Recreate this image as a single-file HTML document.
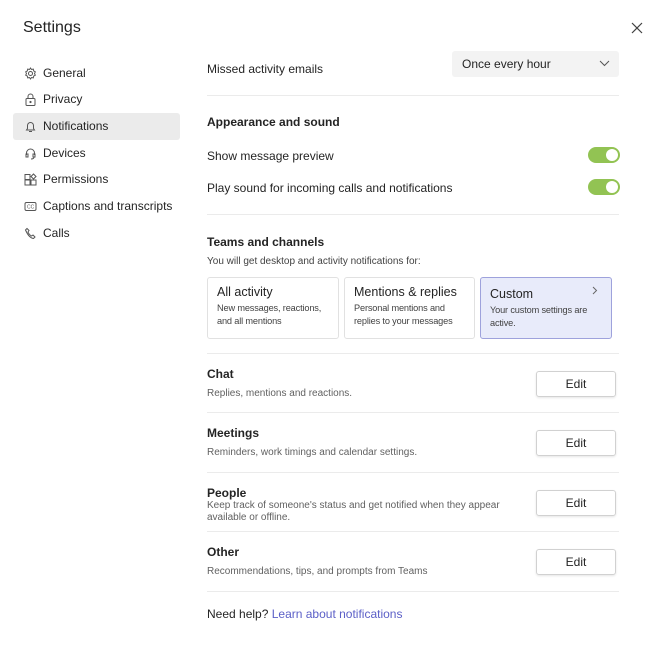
<!DOCTYPE html>
<html><head><style>
*{margin:0;padding:0;box-sizing:border-box}
body{width:658px;height:659px;background:#fff;font-family:"Liberation Sans",sans-serif;color:#242424;position:relative;overflow:hidden}
.a{position:absolute;white-space:nowrap}
.t{font-size:12px}
.s{font-size:10px;color:#616161}
.h{font-size:12px;font-weight:bold}
.line{position:absolute;left:207px;width:412px;height:1px;background:#ebebeb}
.nav{position:absolute;left:13px;width:167px;height:27px;font-size:12px;padding-left:30px;line-height:27px}
.nav svg{position:absolute;left:11px;top:7px}
.tog{position:absolute;left:588px;width:32px;height:16px;border-radius:8px;background:#92c353}
.tog::after{content:"";position:absolute;right:2px;top:2px;width:12px;height:12px;border-radius:50%;background:#fff}
.card{position:absolute;top:277px;height:62px;border:1px solid #e1e1e1;border-radius:3px;padding:7px 6px 7px 9px}
.card b{display:block;font-weight:normal;font-size:12.5px;margin-bottom:3px}
.card span{font-size:9.2px;letter-spacing:-0.15px;color:#424242;line-height:13px;display:block;white-space:normal}
.btn{position:absolute;left:536px;width:80px;height:26px;border:1px solid #d1d1d1;border-radius:3px;font-size:12px;text-align:center;line-height:24px;box-shadow:0 1px 2px rgba(0,0,0,.1)}
</style></head><body>
<div class="a" style="left:23px;top:19px;font-size:16px">Settings</div>
<svg class="a" style="left:631px;top:22px" width="12" height="12" viewBox="0 0 12 12"><path d="M1 1L11 11M11 1L1 11" stroke="#424242" stroke-width="1.2"/></svg>

<div class="nav" style="top:60px"><svg width="13" height="13" viewBox="0 0 13 13" fill="none" stroke="#555" stroke-width="1"><circle cx="6.5" cy="6.5" r="2"/><path d="M6.5 1l1 1.5 1.8-.4.4 1.8 1.6.9-.8 1.7.8 1.7-1.6.9-.4 1.8-1.8-.4-1 1.5-1-1.5-1.8.4-.4-1.8-1.6-.9.8-1.7-.8-1.7 1.6-.9.4-1.8 1.8.4z"/></svg>General</div>
<div class="nav" style="top:86px"><svg width="13" height="13" viewBox="0 0 13 13" fill="none" stroke="#555"><rect x="2" y="5.5" width="9" height="7" rx="1"/><path d="M4 5.5V3.5a2.5 2.5 0 015 0v2"/><circle cx="6.5" cy="9" r=".6" fill="#555"/></svg>Privacy</div>
<div class="nav" style="top:113px;background:#ebebeb;border-radius:3px"><svg width="13" height="13" viewBox="0 0 13 13" fill="none" stroke="#555"><path d="M2.5 10h8l-1-1.5V5.5a3 3 0 00-6 0v3z M5 11.5h3"/></svg>Notifications</div>
<div class="nav" style="top:140px"><svg width="13" height="13" viewBox="0 0 13 13" fill="none" stroke="#555"><path d="M2.5 8V6a4 4 0 018 0v2M2 7h2v3H2zM9 7h2v3H9zM10 10q0 2-3 2"/></svg>Devices</div>
<div class="nav" style="top:166px"><svg width="13" height="13" viewBox="0 0 13 13" fill="none" stroke="#555"><rect x="1" y="1.5" width="5" height="5"/><rect x="1" y="7" width="5" height="5"/><rect x="7" y="7" width="5" height="5"/><path d="M9.5 1l2.5 2.5-2.5 2.5-2.5-2.5z"/></svg>Permissions</div>
<div class="nav" style="top:193px"><svg width="13" height="13" viewBox="0 0 13 13" fill="none" stroke="#555"><rect x="1" y="2.5" width="11" height="8" rx="1.5"/><text x="3" y="8.6" font-size="5" fill="#555" stroke="none" font-family="Liberation Sans">CC</text></svg>Captions and transcripts</div>
<div class="nav" style="top:220px"><svg width="13" height="13" viewBox="0 0 13 13" fill="none" stroke="#555"><path d="M3 1.5l2 2-1 1.5q1 2.5 3.5 4l1.5-1 2 2-1.5 1.5Q5 11 1.5 3z"/></svg>Calls</div>

<div class="a t" style="left:207px;top:62px">Missed activity emails</div>
<div class="a" style="left:452px;top:51px;width:167px;height:26px;background:#f3f3f3;border-radius:3px;font-size:12px;line-height:26px;padding-left:10px">Once every hour</div>
<svg class="a" style="left:599px;top:60px" width="11" height="7" viewBox="0 0 11 7"><path d="M1 1l4.5 4.5L10 1" fill="none" stroke="#555"/></svg>
<div class="line" style="top:95px"></div>

<div class="a h" style="left:207px;top:115px">Appearance and sound</div>
<div class="a t" style="left:207px;top:149px">Show message preview</div>
<div class="tog" style="top:147px"></div>
<div class="a t" style="left:207px;top:181px">Play sound for incoming calls and notifications</div>
<div class="tog" style="top:179px"></div>
<div class="line" style="top:214px"></div>

<div class="a h" style="left:207px;top:235px">Teams and channels</div>
<div class="a s" style="left:207px;top:256px;color:#424242">You will get desktop and activity notifications for:</div>
<div class="card" style="left:207px;width:132px"><b>All activity</b><span>New messages, reactions, and all mentions</span></div>
<div class="card" style="left:344px;width:131px"><b>Mentions &amp; replies</b><span>Personal mentions and replies to your messages</span></div>
<div class="card" style="left:480px;width:132px;background:#e8ebfa;border-color:#9ea2dc;padding-top:9px"><b>Custom</b><span>Your custom settings are active.</span></div>
<svg class="a" style="left:592px;top:286px" width="6" height="9" viewBox="0 0 6 9"><path d="M1 1l3.5 3.5L1 8" fill="none" stroke="#666"/></svg>
<div class="line" style="top:353px"></div>

<div class="a h" style="left:207px;top:367px">Chat</div>
<div class="a s" style="left:207px;top:388px">Replies, mentions and reactions.</div>
<div class="btn" style="top:371px">Edit</div>
<div class="line" style="top:412px"></div>

<div class="a h" style="left:207px;top:426px">Meetings</div>
<div class="a s" style="left:207px;top:447px">Reminders, work timings and calendar settings.</div>
<div class="btn" style="top:430px">Edit</div>
<div class="line" style="top:472px"></div>

<div class="a h" style="left:207px;top:486px">People</div>
<div class="a s" style="left:207px;top:500px;line-height:12px">Keep track of someone's status and get notified when they appear<br>available or offline.</div>
<div class="btn" style="top:490px">Edit</div>
<div class="line" style="top:531px"></div>

<div class="a h" style="left:207px;top:545px">Other</div>
<div class="a s" style="left:207px;top:566px">Recommendations, tips, and prompts from Teams</div>
<div class="btn" style="top:549px">Edit</div>
<div class="line" style="top:591px"></div>

<div class="a t" style="left:207px;top:607px">Need help? <span style="color:#5b5fc7">Learn about notifications</span></div>
</body></html>
